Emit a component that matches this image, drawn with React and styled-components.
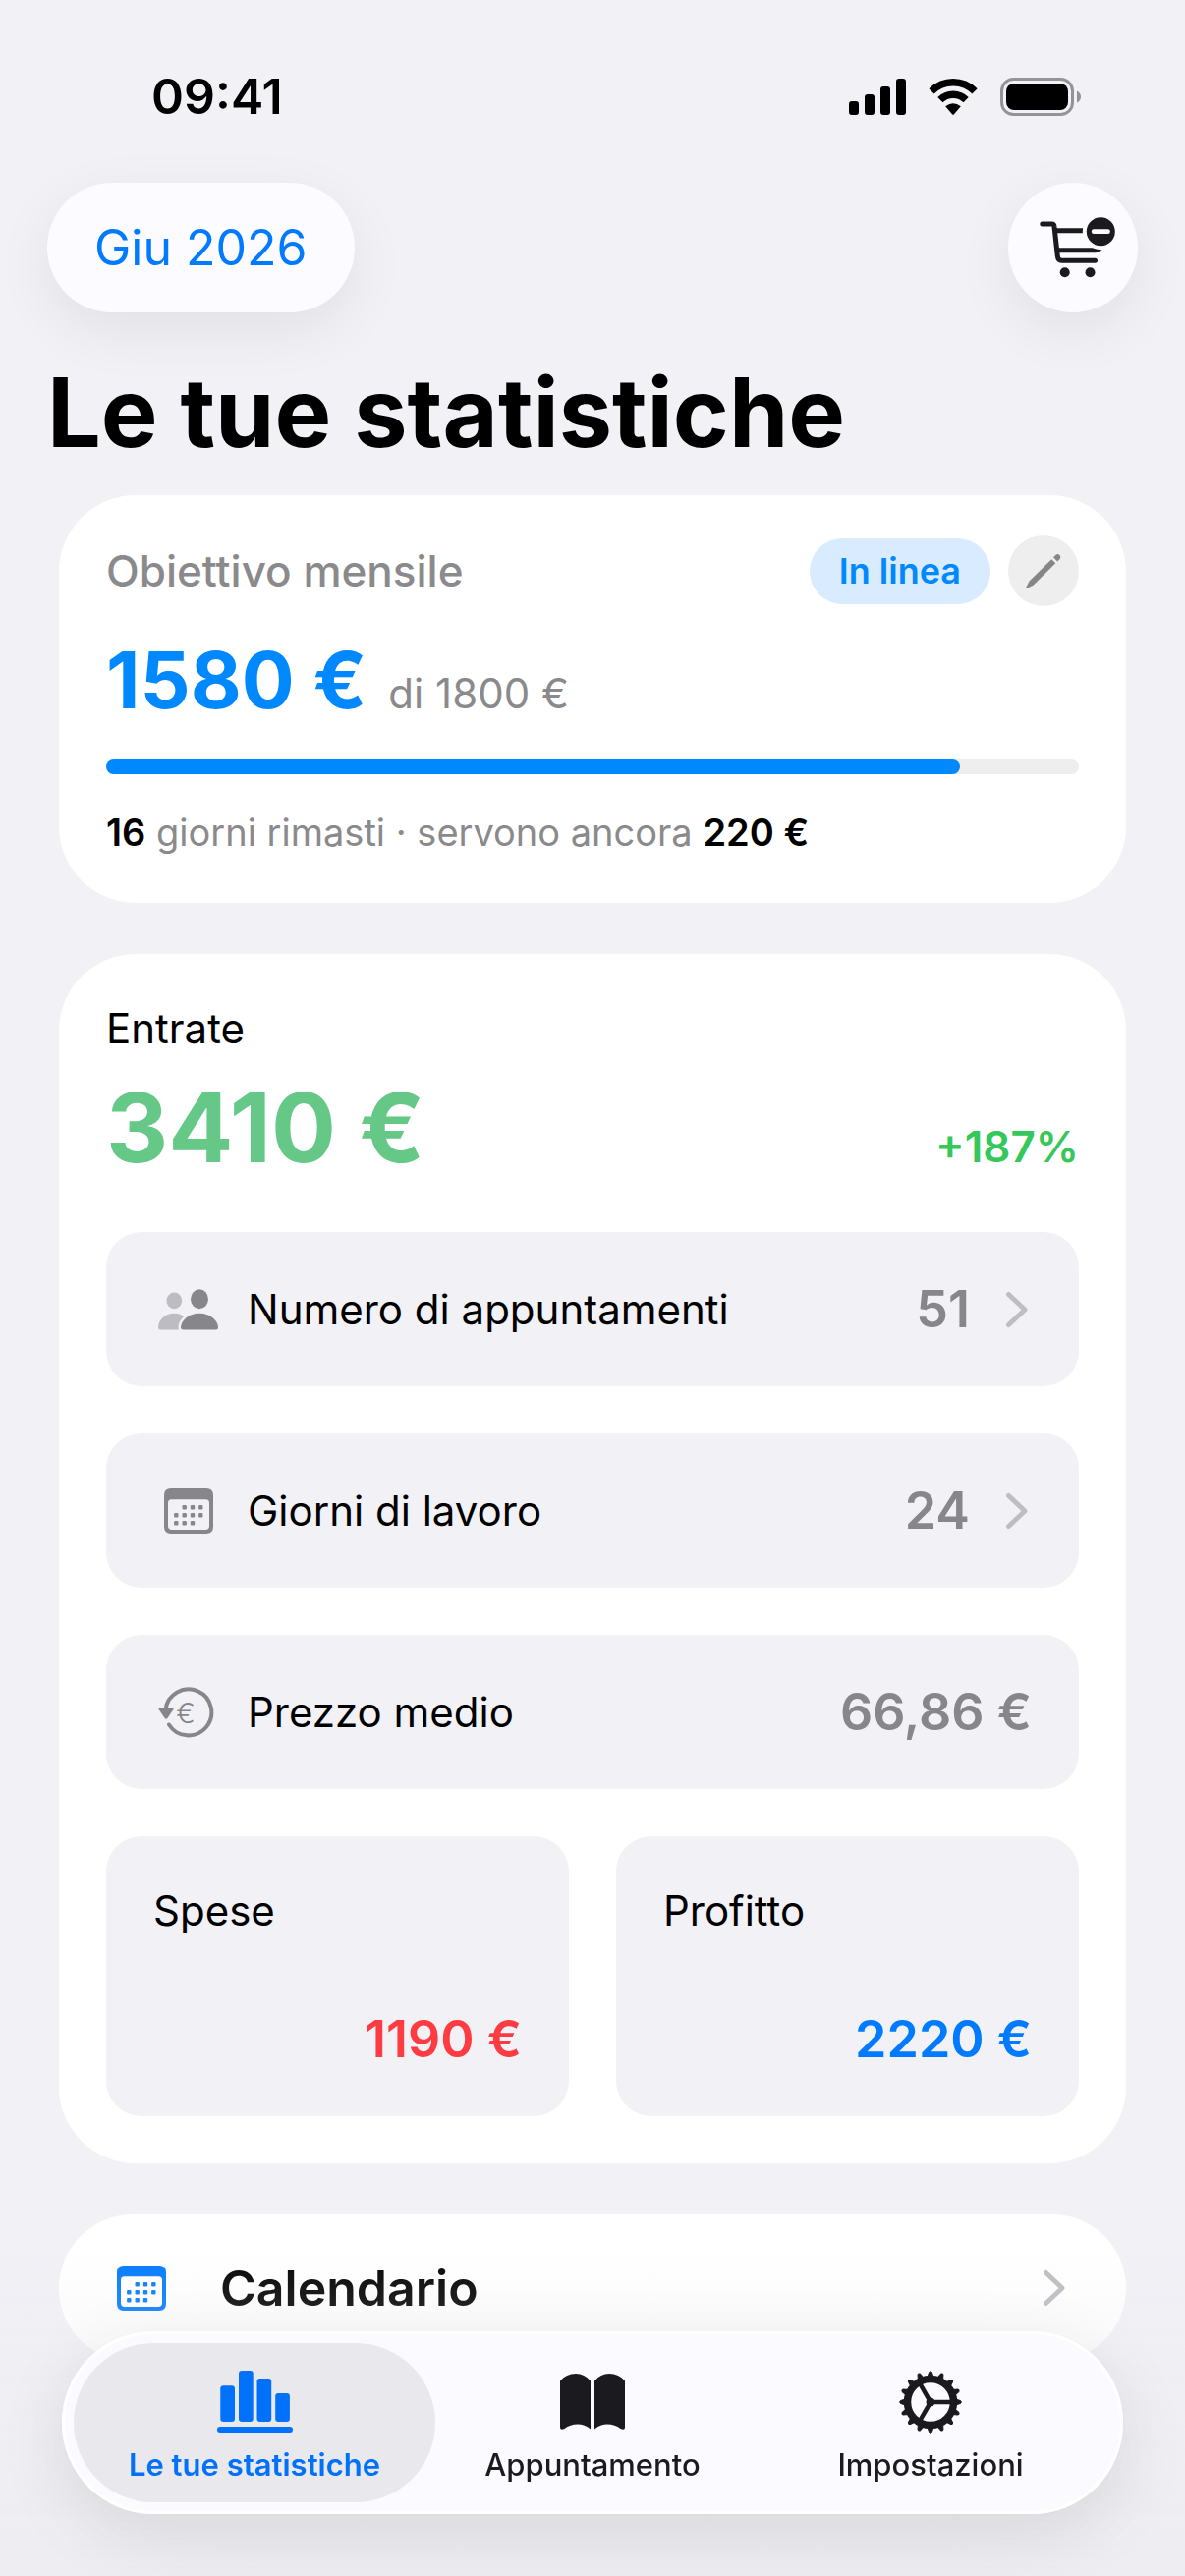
import React, { useState } from "react";
import styled, { createGlobalStyle } from "styled-components";

const rows = [
  { id: "appointments", label: "Numero di appuntamenti", value: "51", icon: PeopleIcon, link: true },
  { id: "days", label: "Giorni di lavoro", value: "24", icon: CalendarIcon, link: true },
  { id: "price", label: "Prezzo medio", value: "66,86 €", icon: EuroIcon, link: false },
];

const tabs = [
  { id: "stats", label: "Le tue statistiche", icon: BarsIcon },
  { id: "appointment", label: "Appuntamento", icon: BookIcon },
  { id: "settings", label: "Impostazioni", icon: GearIcon },
];

const goal = { current: 1580, target: 1800 };

export default function App() {
  const [activeTab, setActiveTab] = useState("stats");
  const percent = (goal.current / goal.target) * 100;

  return (
    <>
      <GlobalStyle />
      <Page>
        <StatusBar>
          <Time>09:41</Time>
          <StatusIcons>
            <SignalIcon />
            <WifiIcon />
            <BatteryIcon />
          </StatusIcons>
        </StatusBar>
        <Toolbar>
          <MonthButton type="button">Giu 2026</MonthButton>
          <CartButton type="button" aria-label="Aggiungi spesa">
            <CartIcon />
          </CartButton>
        </Toolbar>
        <Title>Le tue statistiche</Title>

        <Cards>
          <GoalCard>
            <GoalHeader>
              <h2>Obiettivo mensile</h2>
              <Badge>In linea</Badge>
              <EditButton type="button" aria-label="Modifica obiettivo">
                <PencilIcon />
              </EditButton>
            </GoalHeader>
            <GoalAmount>
              <strong>{goal.current} €</strong>
              <span>di {goal.target} €</span>
            </GoalAmount>
            <Track role="progressbar" aria-valuenow={goal.current} aria-valuemin={0} aria-valuemax={goal.target}>
              <Fill style={{ width: `${percent}%` }} />
            </Track>
            <GoalNote>
              <b>16</b> giorni rimasti · servono ancora <b>220 €</b>
            </GoalNote>
          </GoalCard>

          <IncomeCard>
            <Label>Entrate</Label>
            <Income>
              <strong>3410 €</strong>
              <span>+187%</span>
            </Income>
            <Stats>
              {rows.map(({ id, label, value, icon: Icon, link }) => (
                <StatRow key={id} as={link ? "button" : "div"}>
                  <Icon />
                  <Label>{label}</Label>
                  <Value>{value}</Value>
                  {link && <ChevronIcon />}
                </StatRow>
              ))}
              <Split>
                <Tile>
                  <Label>Spese</Label>
                  <Value $color="#fd3c42">1190 €</Value>
                </Tile>
                <Tile>
                  <Label>Profitto</Label>
                  <Value $color="#007aff">2220 €</Value>
                </Tile>
              </Split>
            </Stats>
          </IncomeCard>

          <CalendarLink href="#calendario">
            <CalendarIcon />
            <span>Calendario</span>
            <ChevronIcon />
          </CalendarLink>
        </Cards>
      </Page>

      <BottomArea>
        <TabBar>
          {tabs.map(({ id, label, icon: Icon }) => (
            <Tab key={id} type="button" $active={activeTab === id} onClick={() => setActiveTab(id)}>
              <Icon />
              <span>{label}</span>
            </Tab>
          ))}
        </TabBar>
      </BottomArea>
    </>
  );
}

function SignalIcon() {
  return (
    <svg width="58" height="38" viewBox="0 0 58 38" aria-hidden="true">
      <rect x="0" y="24" width="10" height="14" rx="3" />
      <rect x="16" y="17" width="10" height="21" rx="3" />
      <rect x="32" y="9" width="10" height="29" rx="3" />
      <rect x="48" y="1" width="10" height="37" rx="3" />
    </svg>
  );
}

function WifiIcon() {
  return (
    <svg width="52" height="38" viewBox="0 0 52 38" aria-hidden="true">
      <g fill="none" stroke="#000" strokeWidth="7.4">
        <path d="M4 13.8A31.1 31.1 0 0 1 48 13.8" />
        <path d="M12.9 22.7A18.5 18.5 0 0 1 39.1 22.7" />
      </g>
      <path d="M18.2 29.2Q26 23.2 33.8 29.2L27 37.2Q26 38.2 25 37.2Z" />
    </svg>
  );
}

function BatteryIcon() {
  return (
    <svg width="82" height="39" viewBox="0 0 82 39" aria-hidden="true">
      <rect x="1.5" y="1.5" width="72" height="36" rx="12" fill="none" stroke="#949498" strokeWidth="3" />
      <rect x="6" y="6" width="63" height="27" rx="8" />
      <path d="M78 13.5Q82 15.5 82 19.5Q82 23.5 78 25.5Z" fill="#949498" />
    </svg>
  );
}

function CartIcon() {
  return (
    <svg width="132" height="132" viewBox="0 0 132 132" aria-hidden="true">
      <g fill="none" stroke="#1b1a1f" strokeWidth="5" strokeLinecap="round" strokeLinejoin="round">
        <path d="M34.8 42H44.5Q46.8 42 47 44.5L50.3 74.5Q50.8 79.3 54.5 79.3H88.5" />
        <path d="M49 48.7H88" strokeLinecap="butt" />
        <path d="M52 68.7H89" />
        <path d="M90 68.3L93 67" />
      </g>
      <circle cx="57.7" cy="91.2" r="5" fill="#1b1a1f" />
      <circle cx="83.5" cy="91.2" r="5" fill="#1b1a1f" />
      <circle cx="94.3" cy="49.7" r="18.5" fill="#fcfbff" />
      <circle cx="94.3" cy="49.7" r="14.5" fill="#1b1a1f" />
      <path d="M87.2 49.7H101.5" stroke="#fcfbff" strokeWidth="4.8" strokeLinecap="round" />
    </svg>
  );
}

function PencilIcon() {
  return (
    <svg width="72" height="72" viewBox="0 0 72 72" fill="#868688" aria-hidden="true">
      <path d="M44.2 24.2L48.3 28.3L25.5 50.8L19.2 53.8Q17.8 54.2 18.4 52.6L21.5 46.5Z" />
      <path d="M46 22.3L48.7 19.7Q50.5 18.3 52.5 20.1Q54.2 22 52.8 23.8L50.2 26.5Z" />
    </svg>
  );
}

function PeopleIcon() {
  return (
    <svg width="72" height="48" viewBox="0 0 72 48" aria-hidden="true">
      <g fill="#bdbcc2">
        <ellipse cx="21.3" cy="14.9" rx="7.8" ry="8.4" />
        <path d="M7.500 44.5Q5 44.5 5 42C5 35 11.5 27.7 21.3 27.7C31 27.7 36 34 36 44.5Z" />
      </g>
      <path
        d="M30.5 44.5Q28 44.5 28 42C28 36 35 27.7 47 27.7C59 27.7 66 36 66 42Q66 44.5 63.5 44.5Z"
        fill="#87868b"
        stroke="#f2f1f6"
        strokeWidth="5"
        paintOrder="stroke"
      />
      <ellipse cx="47" cy="13.2" rx="9" ry="10" fill="#87868b" />
    </svg>
  );
}

function CalendarIcon() {
  const dots = [
    [31.7, 20.3], [40, 20.3], [48.3, 20.3],
    [23.3, 28.2], [31.7, 28.2], [40, 28.2], [48.3, 28.2],
    [23.3, 36.2], [31.7, 36.2], [40, 36.2],
  ];
  return (
    <svg width="72" height="48" viewBox="0 0 72 48" fill="currentColor" aria-hidden="true">
      <path
        fillRule="evenodd"
        d="M18 1H54Q61 1 61 8V40Q61 47 54 47H18Q11 47 11 40V8Q11 1 18 1ZM18.5 12.3Q15 12.3 15 15.8V39Q15 43 19 43H53Q57 43 57 39V15.8Q57 12.3 53.5 12.3Z"
      />
      {dots.map(([x, y]) => (
        <rect key={`${x}-${y}`} x={x - 2.2} y={y - 2.2} width="4.4" height="4.4" rx="1" />
      ))}
    </svg>
  );
}

function EuroIcon() {
  return (
    <svg width="72" height="54" viewBox="0 0 72 54" aria-hidden="true">
      <path d="M16 39.5A23.5 23.5 0 1 0 12.5 24" fill="none" stroke="#87868b" strokeWidth="4" strokeLinecap="round" />
      <path d="M6.5 22.5H19.5Q21.5 22.5 20.3 24.3L14.4 33Q13 34.5 11.7 33L5.8 24.3Q4.6 22.5 6.5 22.5Z" fill="#87868b" />
      <text x="33" y="37.5" textAnchor="middle" fontSize="29" fontWeight="300" fill="#87868b">€</text>
    </svg>
  );
}

function ChevronIcon() {
  return (
    <svg width="27" height="38" viewBox="0 0 27 38" fill="none" stroke="#bdbdc2" aria-hidden="true">
      <path d="M3.5 3.5L20 19L3.5 34.5" strokeWidth="5" strokeLinecap="round" strokeLinejoin="round" />
    </svg>
  );
}

function BarsIcon() {
  return (
    <svg width="77" height="64" viewBox="0 0 77 64" fill="currentColor" aria-hidden="true">
      <rect x="3.3" y="16.3" width="14.7" height="36.7" rx="3" />
      <rect x="22" y="1" width="14.7" height="52" rx="3" />
      <rect x="40.5" y="9" width="14.7" height="44" rx="3" />
      <rect x="59.2" y="24" width="14.7" height="29" rx="3" />
      <rect x="0" y="58" width="77" height="6" rx="3" />
    </svg>
  );
}

function BookIcon() {
  return (
    <svg width="66" height="64" viewBox="0 0 66 64" fill="currentColor" aria-hidden="true">
      <path d="M0 11.5Q6 4 16 4Q25 4 31 11.5V60.5Q25 55.5 18 55.5Q10 55.5 4.5 60Q0 62 0 58.5Z" />
      <path d="M66 11.5Q60 4 50 4Q41 4 35 11.5V60.5Q41 55.5 48 55.5Q56 55.5 61.5 60Q66 62 66 58.5Z" />
    </svg>
  );
}

function GearIcon() {
  const teeth = Array.from({ length: 16 }, (_, i) => i * 22.5);
  return (
    <svg width="66" height="66" viewBox="-33 -33 66 66" fill="none" stroke="currentColor" aria-hidden="true">
      <circle r="23.5" strokeWidth="7.5" />
      {teeth.map((angle) => (
        <path key={angle} d="M25 -3.2L30.5 -1.4Q32.2 0 30.5 1.4L25 3.2Z" fill="currentColor" strokeWidth="1" transform={`rotate(${angle})`} />
      ))}
      {[0, 120, 240].map((angle) => (
        <path key={angle} d="M0 0H22" strokeWidth="4.5" transform={`rotate(${angle})`} />
      ))}
      <circle r="4.5" fill="currentColor" stroke="none" />
    </svg>
  );
}

const GlobalStyle = createGlobalStyle`
  * {
    box-sizing: border-box;
    margin: 0;
    padding: 0;
  }
  body {
    background-color: #f2f1f6;
    font-family: Inter, "Liberation Sans", sans-serif;
    color: #000;
  }
  button {
    border: none;
    background: none;
    font: inherit;
    color: inherit;
    cursor: pointer;
  }
  svg {
    display: block;
    flex-shrink: 0;
  }
`;

const Page = styled.main`
  min-height: 100vh;
  padding-bottom: 200px;
`;

const StatusBar = styled.div`
  display: flex;
  align-items: center;
  justify-content: space-between;
  padding: 68px 106px 58px 154px;
`;

const Time = styled.time`
  font-size: 50px;
  line-height: 60px;
  font-weight: 600;
`;

const StatusIcons = styled.div`
  display: flex;
  align-items: center;
  gap: 22px;
`;

const Toolbar = styled.div`
  display: flex;
  justify-content: space-between;
  padding: 0 48px;
`;

const GlassButton = styled.button`
  height: 132px;
  border-radius: 66px;
  background-color: #fcfbff;
  box-shadow: 0 18px 60px rgba(0, 0, 0, 0.07);
`;

const MonthButton = styled(GlassButton)`
  padding: 0 48px;
  font-size: 50px;
  color: #007aff;
`;

const CartButton = styled(GlassButton)`
  width: 132px;
`;

const Title = styled.h1`
  margin: 42px 48px 24px;
  font-size: 97px;
  line-height: 120px;
  font-weight: 700;
`;

const Cards = styled.div`
  display: flex;
  flex-direction: column;
  gap: 52px;
  padding: 0 60px;
`;

const Card = styled.section`
  border-radius: 78px;
  background-color: #fff;
`;

const GoalCard = styled(Card)`
  padding: 41px 48px 48px;
`;

const GoalHeader = styled.div`
  display: flex;
  align-items: center;
  gap: 18px;
  h2 {
    flex: 1;
    font-size: 44px;
    font-weight: 500;
    color: #8a8a8c;
  }
`;

const Badge = styled.span`
  padding: 0 30px;
  border-radius: 34px;
  font-size: 36px;
  line-height: 67px;
  font-weight: 600;
  color: #0088ff;
  background-color: #d9ebff;
`;

const EditButton = styled.button`
  width: 72px;
  height: 72px;
  border-radius: 50%;
  background-color: #eeeeef;
`;

const GoalAmount = styled.div`
  display: flex;
  align-items: baseline;
  gap: 22px;
  margin-top: 29px;
  strong {
    font-size: 80px;
    line-height: 92px;
    font-weight: 700;
    color: #0088ff;
  }
  span {
    font-size: 42px;
    line-height: 56px;
    color: #8a8a8c;
  }
`;

const Track = styled.div`
  height: 15px;
  margin: 35px 0;
  border-radius: 8px;
  background-color: #eeeeef;
`;

const Fill = styled.div`
  height: 100%;
  border-radius: 8px;
  background-color: #0088ff;
`;

const GoalNote = styled.p`
  font-size: 38px;
  line-height: 48px;
  color: #8a8a8c;
  b {
    font-weight: 600;
    color: #000;
  }
`;

const IncomeCard = styled(Card)`
  padding: 48px;
`;

const Label = styled.p`
  font-size: 42px;
  line-height: 56px;
`;

const Income = styled.div`
  display: flex;
  align-items: baseline;
  justify-content: space-between;
  margin: 15px 0 48px;
  strong {
    font-size: 98px;
    line-height: 116px;
    font-weight: 700;
    color: #65c887;
  }
  span {
    font-size: 44px;
    line-height: 56px;
    font-weight: 600;
    color: #34c759;
  }
`;

const Stats = styled.div`
  display: flex;
  flex-direction: column;
  gap: 48px;
`;

const Value = styled.p`
  font-size: 52px;
  line-height: 60px;
  font-weight: 600;
  color: ${(props) => props.$color || "#87868b"};
`;

const StatRow = styled.div`
  display: flex;
  align-items: center;
  width: 100%;
  height: 157px;
  padding: 0 48px;
  border-radius: 36px;
  background-color: #f2f1f6;
  text-align: left;
  color: #87868b;
  ${Label} {
    flex: 1;
    margin-left: 24px;
    color: #000;
  }
  ${Value} + svg {
    margin-left: 36px;
  }
`;

const Split = styled.div`
  display: grid;
  grid-template-columns: 1fr 1fr;
  gap: 48px;
`;

const Tile = styled.div`
  padding: 48px;
  border-radius: 36px;
  background-color: #f2f1f6;
  ${Value} {
    margin-top: 73px;
    text-align: right;
  }
`;

const CalendarLink = styled.a`
  display: flex;
  align-items: center;
  height: 150px;
  padding: 0 58px 0 48px;
  border-radius: 75px;
  background-color: #fff;
  color: #007aff;
  text-decoration: none;
  span {
    flex: 1;
    margin-left: 44px;
    font-size: 50px;
    font-weight: 600;
    color: #000;
  }
`;

const BottomArea = styled.div`
  position: fixed;
  left: 0;
  right: 0;
  bottom: 0;
  padding: 90px 63px 63px;
  background: linear-gradient(rgba(235, 235, 239, 0), rgba(235, 235, 239, 0.2) 90px, rgba(235, 235, 239, 0.6));
`;

const TabBar = styled.nav`
  display: flex;
  padding: 12px;
  border-radius: 93px;
  background-color: #fafaff;
  box-shadow: 0 20px 70px rgba(0, 0, 0, 0.1), inset 0 0 0 3px #fff;
`;

const Tab = styled.button`
  flex: 1;
  display: flex;
  flex-direction: column;
  align-items: center;
  justify-content: space-between;
  height: 162px;
  padding: 27px 0 19px;
  border-radius: 81px;
  background-color: ${(props) => (props.$active ? "#e8e8ed" : "transparent")};
  color: ${(props) => (props.$active ? "#0071f8" : "#1b1a1f")};
  font-size: 31px;
  line-height: 38px;
  font-weight: ${(props) => (props.$active ? 600 : 500)};
  & + & {
    margin-left: -24px;
  }
`;
